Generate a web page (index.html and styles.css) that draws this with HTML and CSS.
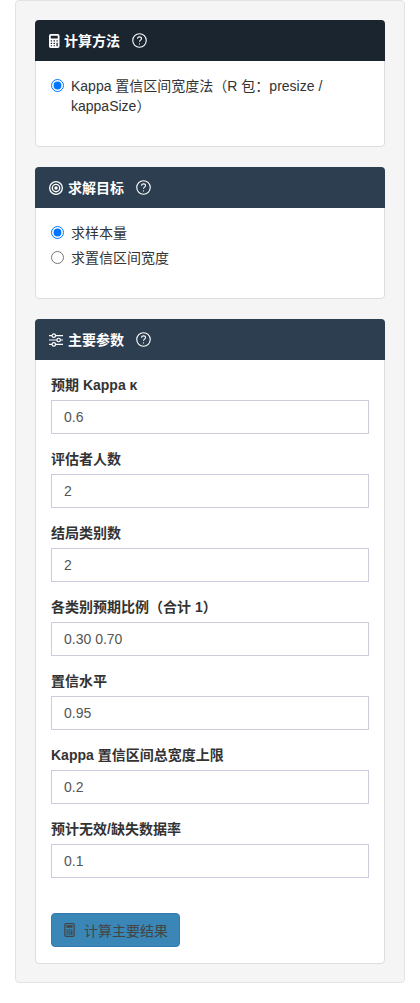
FILE: index.html
```html
<!DOCTYPE html>
<html lang="zh-CN">
<head>
  <meta charset="UTF-8" />
  <meta name="viewport" content="width=device-width, initial-scale=1" />
  <title>Kappa 样本量计算</title>
  <link rel="stylesheet" href="styles.css">
</head>
<body>

  <div class="sidebar">

    <div class="card">
      <div class="card-head head-dark">
        <svg class="head-icon calc" viewBox="2 0 12 16"><path fill-rule="evenodd" d="M4 0h8a2 2 0 0 1 2 2v12a2 2 0 0 1-2 2H4a2 2 0 0 1-2-2V2a2 2 0 0 1 2-2zm0 2v3h8V2zM4 7v1.500h1.500V7zm3.200 0v1.500h1.600V7zm3.300 0v1.500H12V7zM4 10v1.500h1.500V10zm3.200 0v1.500h1.600V10zm3.300 0v4H12v-4zM4 12.800v1.200h1.500v-1.200zm3.200 0v1.200h1.600v-1.200z"/></svg>
        <span class="head-title">计算方法</span>
        <svg class="help" viewBox="0 0 16 16"><circle cx="8" cy="8" r="7.200"/><path d="M5.800 6.100c.1-1.300 1-2 2.300-2 1.200 0 2.100.7 2.100 1.800 0 1.700-2.200 1.700-2.200 3.400"/><circle class="dot" cx="8" cy="11.600" r=".6"/></svg>
      </div>
      <div class="card-body body-method">
        <label class="radio">
          <input type="radio" name="method" checked>
          <span>Kappa 置信区间宽度法（R 包：presize / kappaSize）</span>
        </label>
      </div>
    </div>

    <div class="card">
      <div class="card-head">
        <svg class="head-icon" viewBox="0 0 16 16"><path fill-rule="evenodd" d="M8 0a8 8 0 1 1 0 16A8 8 0 0 1 8 0zm0 1.500a6.500 6.500 0 1 0 0 13 6.500 6.500 0 0 0 0-13zM8 3a5 5 0 1 1 0 10A5 5 0 0 1 8 3zm0 1.500a3.500 3.500 0 1 0 0 7 3.500 3.500 0 0 0 0-7zM8 6a2 2 0 1 1 0 4 2 2 0 0 1 0-4z"/></svg>
        <span class="head-title">求解目标</span>
        <svg class="help" viewBox="0 0 16 16"><circle cx="8" cy="8" r="7.200"/><path d="M5.800 6.100c.1-1.300 1-2 2.300-2 1.200 0 2.100.7 2.100 1.800 0 1.700-2.200 1.700-2.200 3.400"/><circle class="dot" cx="8" cy="11.600" r=".6"/></svg>
      </div>
      <div class="card-body body-goal">
        <label class="radio">
          <input type="radio" name="goal" checked>
          <span>求样本量</span>
        </label>
        <label class="radio">
          <input type="radio" name="goal">
          <span>求置信区间宽度</span>
        </label>
      </div>
    </div>

    <div class="card">
      <div class="card-head">
        <svg class="head-icon sliders" viewBox="0 0 16 16"><path d="M0 3h3.500M7.500 3H16M0 8h9M13 8h3M0 13h3.500M7.500 13H16"/><circle cx="5.500" cy="3" r="2"/><circle cx="11" cy="8" r="2"/><circle cx="5.500" cy="13" r="2"/></svg>
        <span class="head-title">主要参数</span>
        <svg class="help" viewBox="0 0 16 16"><circle cx="8" cy="8" r="7.200"/><path d="M5.800 6.100c.1-1.300 1-2 2.300-2 1.200 0 2.100.7 2.100 1.800 0 1.700-2.200 1.700-2.200 3.400"/><circle class="dot" cx="8" cy="11.600" r=".6"/></svg>
      </div>
      <div class="card-body body-params">
        <div class="field">
          <label for="kappa">预期 Kappa κ</label>
          <input type="text" id="kappa" value="0.6">
        </div>
        <div class="field">
          <label for="raters">评估者人数</label>
          <input type="text" id="raters" value="2">
        </div>
        <div class="field">
          <label for="cats">结局类别数</label>
          <input type="text" id="cats" value="2">
        </div>
        <div class="field">
          <label for="props">各类别预期比例（合计 1）</label>
          <input type="text" id="props" value="0.30 0.70">
        </div>
        <div class="field">
          <label for="conf">置信水平</label>
          <input type="text" id="conf" value="0.95">
        </div>
        <div class="field">
          <label for="width">Kappa 置信区间总宽度上限</label>
          <input type="text" id="width" value="0.2">
        </div>
        <div class="field">
          <label for="missing">预计无效/缺失数据率</label>
          <input type="text" id="missing" value="0.1">
        </div>
        <button type="button" class="btn">
          <svg class="btn-icon" viewBox="2 0 12 16"><path fill-rule="evenodd" d="M4 0h8a2 2 0 0 1 2 2v12a2 2 0 0 1-2 2H4a2 2 0 0 1-2-2V2a2 2 0 0 1 2-2zm0 1.400a.6.6 0 0 0-.6.6v12c0 .3.3.6.6.6h8a.6.6 0 0 0 .6-.6V2a.6.6 0 0 0-.6-.6zM4.500 2.500h7v3h-7zM4.500 7h2v1.500h-2zm2.500 0h2v1.500H7zm2.500 0h2v1.500h-2zm-5 2.500h2V11h-2zm2.500 0h2V11H7zm2.500 0h2v4h-2zM4.500 12h2v1.500h-2zM7 12h2v1.500H7z"/></svg>
          计算主要结果
        </button>
      </div>
    </div>

  </div>

</body>
</html>
```

FILE: styles.css
```css
* {
  box-sizing: border-box;
}

body {
  font-family: 'Liberation Sans', 'Noto Sans CJK SC', sans-serif;
  font-size: 14px;
  color: #333;
  background: #fff;
  margin: 0;
  padding: 0 15px;
}

.sidebar {
  height: 983px;
  padding: 19px 19px 19px;
  background: #f5f5f5;
  border: 1px solid #e3e3e3;
  border-radius: 4px;
}

.card {
  background: #fff;
  border: 1px solid #ddd;
  border-radius: 4px;
  margin-bottom: 20px;
}

.card-head {
  display: flex;
  align-items: center;
  height: 41px;
  margin: -1px -1px 0;
  padding: 0 14px;
  background: #2c3e50;
  color: #fff;
  border-radius: 4px 4px 0 0;
}

.head-dark {
  background: #1a2530;
}

.head-icon {
  width: 14px;
  height: 14px;
  fill: #fff;
  margin-right: 5px;
  flex: none;
}

.calc {
  width: 10.500px;
  margin-right: 4.500px;
}

.sliders {
  fill: none;
  stroke: #fff;
  stroke-width: 1.400;
}

.head-title {
  font-size: 14px;
  font-weight: 700;
  line-height: 1;
}

.help {
  width: 15px;
  height: 15px;
  margin-left: 12px;
  fill: none;
  stroke: #fff;
  stroke-width: 1.200;
  flex: none;
}

.help .dot {
  fill: #fff;
  stroke: none;
}

.card-body {
  padding: 15px;
}

.body-method {
  height: 85px;
}

.body-goal {
  height: 90px;
}

.radio {
  display: flex;
  line-height: 20px;
  margin-bottom: 5px;
  color: #333;
}

.radio input {
  width: 13px;
  height: 13px;
  margin: 3px 7px 0 0;
  flex: none;
  accent-color: #0075ff;
}

.field {
  margin-bottom: 15px;
}

.field label {
  display: block;
  font-weight: 700;
  line-height: 20px;
  margin-bottom: 5px;
}

.field input {
  display: block;
  width: 100%;
  height: 34px;
  padding: 6px 12px;
  font: inherit;
  color: #555;
  background: #fff;
  border: 1px solid #ccccdd;
  border-radius: 0;
}

.body-params {
  height: 603px;
}

.btn {
  display: inline-flex;
  align-items: center;
  height: 34px;
  margin-top: 20px;
  padding: 0 11px 0 12px;
  font: inherit;
  color: #444;
  background: #3a87b7;
  border: 1px solid #337ab0;
  border-radius: 4px;
}

.btn-icon {
  width: 11px;
  height: 14px;
  fill: #444;
  margin-right: 9px;
}
```
